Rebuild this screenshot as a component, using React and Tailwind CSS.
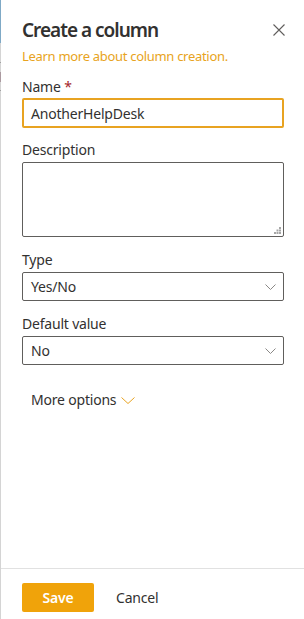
import React from "react";

function Chevron({ w = 11, h = 6, color = "#8a8886" }) {
  return (
    <svg width={w} height={h} viewBox={`0 0 ${w} ${h}`} fill="none">
      <path d={`M0.5 0.5 L${w / 2} ${h - 0.5} L${w - 0.5} 0.5`} stroke={color} strokeWidth="1" />
    </svg>
  );
}

export default function App() {
  const font = { fontFamily: '"Segoe UI", "Noto Sans", "Open Sans", sans-serif' };
  return (
    <div className="flex h-[619px] w-[304px] bg-white text-[#323130]" style={font}>
      <div className="flex w-px shrink-0 flex-col bg-[#d4d4d4]">
        <div className="h-[43px] shrink-0 bg-[#7fa9c6]" />
        <div className="mt-[19px] h-px shrink-0 bg-[#a0a0a0]" />
        <div className="mt-[9px] h-[10px] shrink-0 bg-[#ab9aa0]" />
        <div className="mt-[8px] h-px shrink-0 bg-[#a0a0a0]" />
      </div>
      <div className="flex min-w-0 flex-1 flex-col">
        <div className="flex-1 pl-[21px] pr-[20px]">
          <div className="flex items-center justify-between pt-[18px]">
            <h1 className="text-[19px] font-semibold leading-[24px] tracking-[-1px] text-[#323130]">Create a column</h1>
            <svg width="12" height="12" viewBox="0 0 12 12" className="mr-[-1px]">
              <path d="M0.5 0.5 L11.5 11.5 M11.5 0.5 L0.5 11.5" stroke="#605e5c" strokeWidth="1.1" />
            </svg>
          </div>
          <div className="mt-[5px] text-[13px] leading-[18px] tracking-[-0.3px] text-[#e8a321]">Learn more about column creation.</div>

          <div className="mt-[12px] text-[14px] leading-[20px] tracking-[-0.2px]">
            Name <span className="text-[#a4262c]">*</span>
          </div>
          <div className="mt-[1px] flex h-[30px] items-center rounded-[2px] border-2 border-[#e8a321] px-[7px] text-[14px] tracking-[-0.2px]">
            AnotherHelpDesk
          </div>

          <div className="mt-[12px] text-[14px] leading-[20px] tracking-[-0.2px]">Description</div>
          <div className="relative mt-[2px] h-[75px] rounded-[2px] border border-[#605e5c]">
            <svg className="absolute bottom-[2px] right-[2px]" width="7" height="7" viewBox="0 0 7 7">
              <rect x="5" y="0" width="2" height="2" fill="#a6a6a6" />
              <rect x="2.5" y="2.5" width="2" height="2" fill="#a6a6a6" />
              <rect x="5" y="2.5" width="2" height="2" fill="#a6a6a6" />
              <rect x="0" y="5" width="2" height="2" fill="#a6a6a6" />
              <rect x="2.5" y="5" width="2" height="2" fill="#a6a6a6" />
              <rect x="5" y="5" width="2" height="2" fill="#a6a6a6" />
            </svg>
          </div>

          <div className="mt-[13px] text-[14px] leading-[20px] tracking-[-0.2px]">Type</div>
          <div className="mt-[2px] flex h-[29px] items-center justify-between rounded-[2px] border border-[#605e5c] pl-[8px] pr-[7px] text-[14px] tracking-[-0.2px]">
            <span>Yes/No</span>
            <Chevron />
          </div>

          <div className="mt-[13px] text-[14px] leading-[20px] tracking-[-0.2px]">Default value</div>
          <div className="mt-[2px] flex h-[29px] items-center justify-between rounded-[2px] border border-[#605e5c] pl-[8px] pr-[7px] text-[14px] tracking-[-0.2px]">
            <span>No</span>
            <Chevron />
          </div>

          <div className="mt-[25px] flex items-center gap-[5px] pl-[9px] text-[14px] leading-[20px] tracking-[-0.2px]">
            <span>More options</span>
            <Chevron w={14} h={7} color="#e8a321" />
          </div>
        </div>
        <div className="flex h-[51px] items-start gap-[22px] border-t border-[#e1e1e1] pl-[21px] pt-[14px]">
          <button className="h-[29px] w-[72px] rounded-[2px] bg-[#f0a30a] text-[14px] font-semibold tracking-[-0.2px] text-white">
            Save
          </button>
          <span className="text-[14px] leading-[29px] tracking-[-0.2px]">Cancel</span>
        </div>
      </div>
    </div>
  );
}
